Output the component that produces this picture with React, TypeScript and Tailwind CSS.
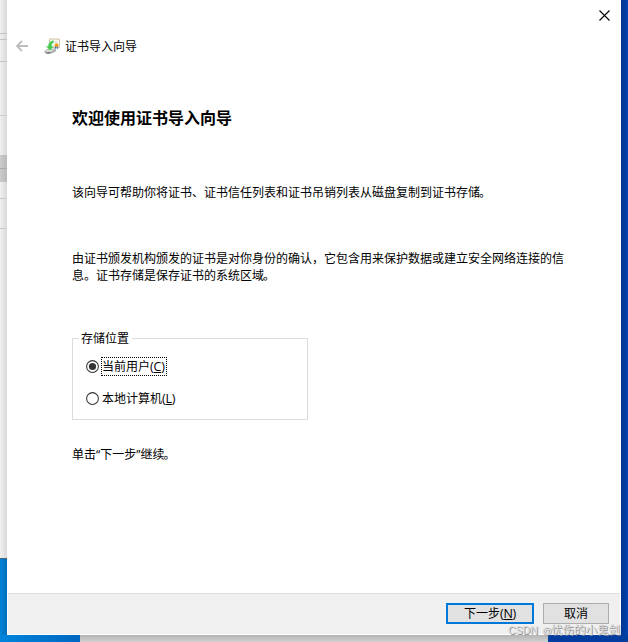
import React from "react";

function BackArrow() {
  return (
    <svg width="14" height="12" viewBox="0 0 14 12" fill="none" stroke="#bdbdbd" strokeWidth="1.8">
      <path d="M2 6H13M7 1L2 6L7 11" />
    </svg>
  );
}

function CertificateIcon() {
  return (
    <svg width="17" height="17" viewBox="0 0 17 17">
      <path d="M5.5 1H15.5V9.5H5.5Z" fill="#faf8f2" stroke="#cfc0a0" />
      <path d="M7.5 3H13.5V5H7.5Z" fill="#e7e5de" />
      <path d="M10.9 8H12.2V10.8H10.9ZM12.8 8H14.1V10.8H12.8Z" fill="#3f78c8" />
      <circle cx="12.5" cy="7.2" r="1.9" fill="#e59b1c" />
      <path d="M.5 13L4 10.8L12 10.5L11.8 13.2L6.5 16H2.2L.5 14.8Z" fill="#a9abab" />
      <path d="M1.5 13L5 11.6L10.8 11.4L6.5 13.8H2.5Z" fill="#e2e4e2" />
      <path d="M3 15L6 14.6" stroke="#666" />
      <path d="M9.2 2.6C6 3.4 4.3 5.6 4.3 8.3L2.4 8.4L6 12.4L9.4 8.2L7.4 8.3C7.3 6.3 8 5 9.5 4.4Z" fill="#43c84e" stroke="#7bdb80" strokeWidth=".5" />
    </svg>
  );
}

function Radio({ checked = false }: { checked?: boolean }) {
  return (
    <svg width="13" height="13" viewBox="0 0 13 13" className="shrink-0">
      <circle cx="6.5" cy="6.5" r="5.9" fill="#fff" stroke="#333" strokeWidth="1.05" />
      {checked && <circle cx="6.5" cy="6.5" r="3.6" fill="#333" />}
    </svg>
  );
}

function Accel({ letter }: { letter: string }) {
  return (
    <span className="font-['Open_Sans','Noto_Sans',sans-serif] text-[12.5px] tracking-[-0.2px]">
      (<span className="underline decoration-1 underline-offset-[1px]">{letter}</span>)
    </span>
  );
}

function BackgroundWindow() {
  return (
    <div className="flex h-[559px] w-[7px] shrink-0 flex-col border-b border-[#48657b] bg-gradient-to-r from-[#f0f0f0] to-[#d9d9d9]">
      <div className="h-[34px] border-b border-[#c4c4c4]" />
      <div className="h-[6px] border-b border-[#c4c4c4]" />
      <div className="h-[22px] border-b border-[#c4c4c4]" />
      <div className="h-[54px] border-b border-[#cfcfcf]" />
      <div className="h-[39px]" />
      <div className="h-[14px] border-b border-[#a8a8a8] bg-gradient-to-r from-[#cbcbcb] to-[#b9b9b9]" />
      <div className="h-[13px] bg-gradient-to-r from-[#cbcbcb] to-[#b9b9b9]" />
      <div className="h-[17px] border-b border-[#c8c8c8]" />
      <div className="h-[30px] border-b border-[#c8c8c8]" />
    </div>
  );
}

export default function App() {
  return (
    <div className="relative flex h-[642px] w-[628px] flex-col overflow-hidden bg-[#0340a8] font-['Liberation_Sans','Noto_Sans_CJK_SC',sans-serif] text-[12px] leading-[17px] text-black">
      <div className="flex h-[635px]">
        <div className="w-[7px] shrink-0 bg-gradient-to-r from-[#0084dc] to-[#006fbd]">
          <BackgroundWindow />
        </div>
        <main className="flex w-[614px] shrink-0 flex-col bg-white">
          <div className="flex h-[31px] justify-end pt-[10px] pr-[11px]">
            <svg width="11" height="11" viewBox="0 0 11 11" stroke="#000" strokeWidth="1.1">
              <path d="M.5 .5L10.5 10.5M10.5 .5L.5 10.5" />
            </svg>
          </div>
          <header className="flex h-[30px] items-center pl-[8px]">
            <BackArrow />
            <span className="ml-[15px]"><CertificateIcon /></span>
            <span className="ml-[4px] pt-[2px] whitespace-nowrap">证书导入向导</span>
          </header>
          <section className="flex h-[532px] flex-col pl-[65px]">
            <h1 className="mt-[47px] text-[16px] leading-[22px] font-bold whitespace-nowrap">欢迎使用证书导入向导</h1>
            <p className="mt-[55px] whitespace-nowrap">该向导可帮助你将证书、证书信任列表和证书吊销列表从磁盘复制到证书存储<span className="-ml-px">。</span></p>
            <p className="mt-[49px] whitespace-nowrap">
              由证书颁发机构颁发的证书是对你身份的确认，它包含用来保护数据或建立安全网络连接的信
              <br />
              息。证书存储是保存证书的系统区域<span className="-ml-px">。</span>
            </p>
            <div className="mt-[53px] flex h-[82px] w-[236px] shrink-0 flex-col border border-[#dcdcdc]">
              <div className="-mt-[8px] ml-[6px] w-[53px] bg-white pl-[2px] leading-[17px] whitespace-nowrap">存储位置</div>
              <div className="mt-[9px] ml-[13px] flex h-[19px] items-center">
                <Radio checked />
                <span className="ml-[2px] flex h-[19px] w-[66px] items-center whitespace-nowrap border border-dotted border-black">
                  <span className="pt-px">当前用户<Accel letter="C" /></span>
                </span>
              </div>
              <div className="mt-[13px] ml-[13px] flex h-[19px] items-center">
                <Radio />
                <span className="ml-[3px] pt-px whitespace-nowrap">本地计算机<Accel letter="L" /></span>
              </div>
            </div>
            <p className="mt-[26px] whitespace-nowrap">
              单击<span className="font-['Open_Sans',sans-serif]">“</span>下一步<span className="font-['Open_Sans',sans-serif]">”</span>继续<span className="-ml-px">。</span>
            </p>
          </section>
          <footer className="mx-px mb-px flex h-[41px] justify-end border-t border-[#dfdfdf] bg-[#f0f0f0] pt-[9px] pr-[11px]">
            <button className="flex h-[21px] w-[88px] items-center justify-center border-2 border-[#0078d7] bg-[#e1e1e1] whitespace-nowrap">
              <span className="pt-px">下一步<Accel letter="N" /></span>
            </button>
            <button className="ml-[9px] flex h-[21px] w-[66px] items-center justify-center border border-[#adadad] bg-[#e1e1e1]">
              <span className="pt-px">取消</span>
            </button>
          </footer>
        </main>
        <div className="flex-1 bg-gradient-to-r from-[#02358f] to-[#0444b4]" />
      </div>
      <div className="flex h-[7px]">
        <div className="w-[80px] bg-gradient-to-r from-[#0084dc] to-[#0067c0]" />
        <div className="w-[468px] bg-gradient-to-b from-[#b4b4b4] to-[#d0d0d0]" />
        <div className="flex-1 bg-[#033c9f]" />
      </div>
      <div className="absolute top-[622px] left-[508px] flex text-[11.5px] leading-[17px] whitespace-nowrap text-[#dadada] [text-shadow:1px_1px_0_#929292]">
        <span className="w-[34px] text-[10.5px]">CSDN</span>
        <span className="w-[9px] text-[9.5px]">@</span>
        <span>忧伤的小鬼剑</span>
      </div>
    </div>
  );
}
